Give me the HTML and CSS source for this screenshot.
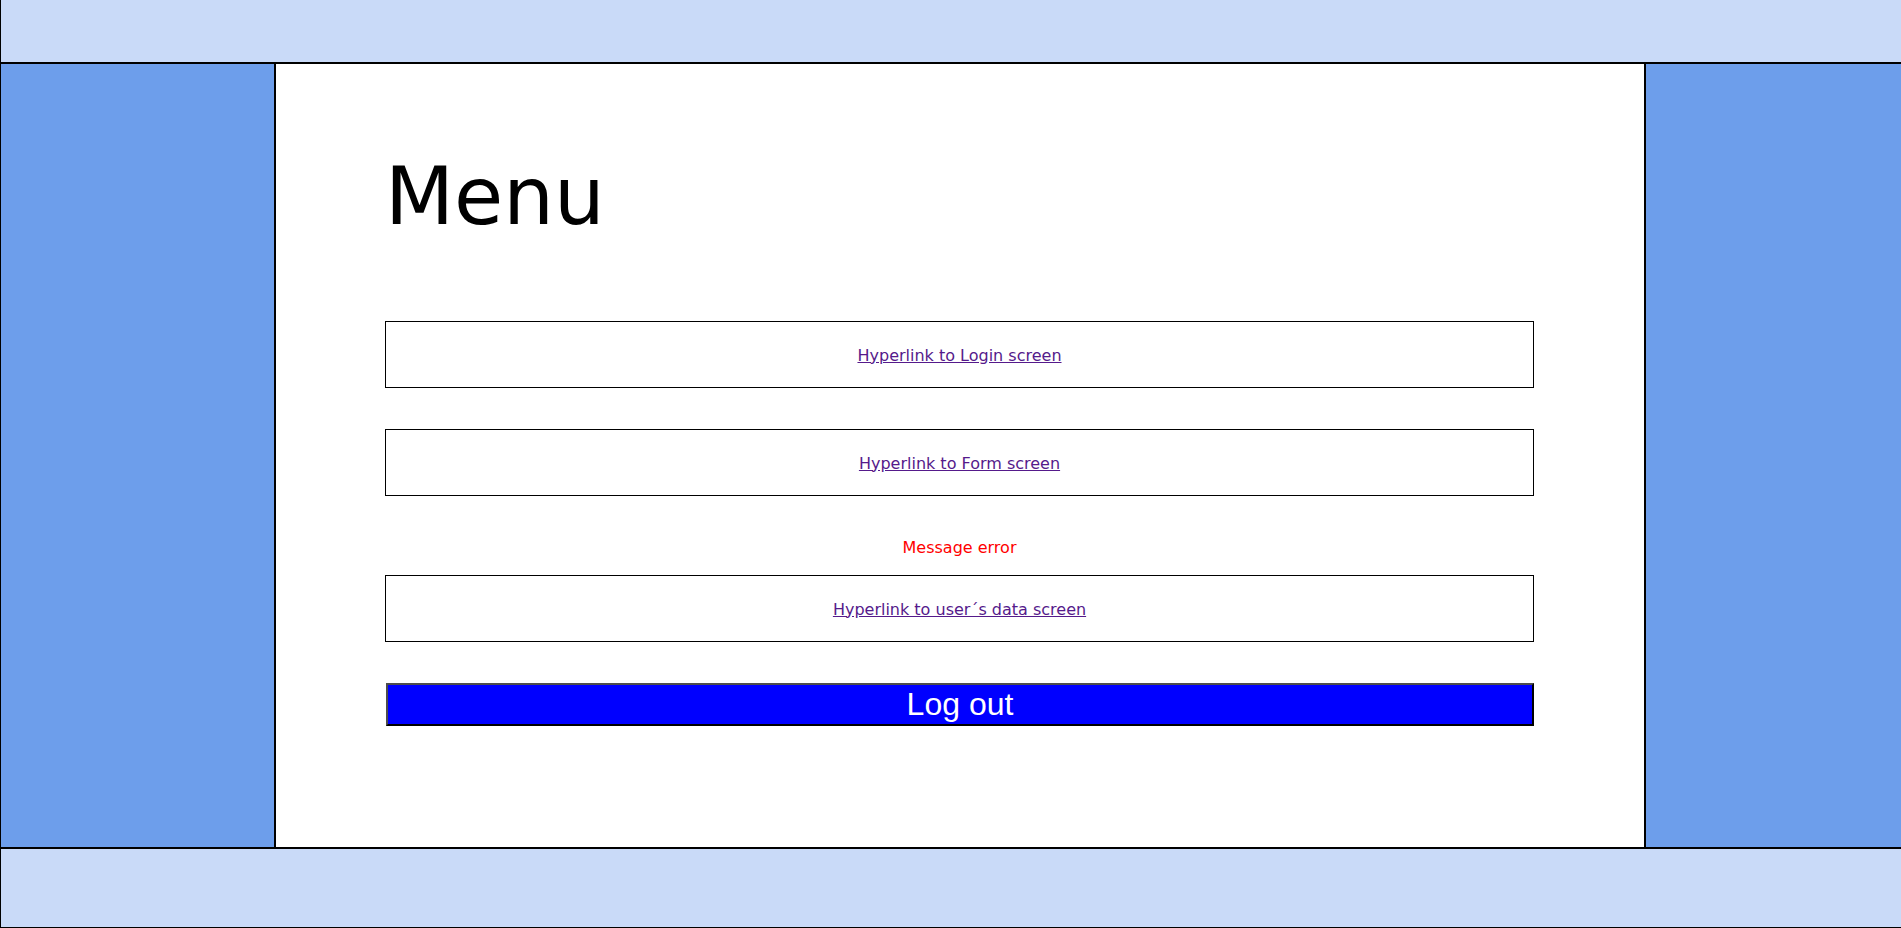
FILE: index.html
```html
<!DOCTYPE html>
<html lang="en">
<head>
<meta charset="utf-8">
<title>Menu</title>
<link rel="stylesheet" href="styles.css">
</head>
<body>
<div class="page">
  <header class="top-bar"></header>
  <main class="middle">
    <aside class="side side-left"></aside>
    <section class="content">
      <h1 class="title">Menu</h1>
      <div class="link-box box-first"><a class="nav-link" href="#login">Hyperlink to Login screen</a></div>
      <div class="link-box box-second"><a class="nav-link" href="#form">Hyperlink to Form screen</a></div>
      <p class="error-msg">Message error</p>
      <div class="link-box box-third"><a class="nav-link" href="#user">Hyperlink to user´s data screen</a></div>
      <button class="logout" type="button">Log out</button>
    </section>
    <aside class="side side-right"></aside>
  </main>
  <footer class="bottom-bar"></footer>
</div>
</body>
</html>
```

FILE: styles.css
```css
html, body {
  margin: 0;
  padding: 0;
}

body {
  font-family: "DejaVu Sans", Verdana, sans-serif;
  background: #ffffff;
}

.page {
  width: 1900px;
  border-left: 1px solid #000;
}

.top-bar {
  height: 62px;
  background: #c9daf8;
  border-bottom: 1px solid #000;
}

.middle {
  display: flex;
  height: 783px;
  border-top: 1px solid #000;
  border-bottom: 1px solid #000;
}

.side {
  background: #6d9eeb;
}

.side-left {
  width: 273px;
  border-right: 1px solid #000;
}

.side-right {
  flex: 1;
  border-left: 1px solid #000;
}

.content {
  border-left: 1px solid #000;
  border-right: 1px solid #000;
  background: #fff;
  padding-left: 109px;
  box-sizing: content-box;
  width: 1259px;
  display: flex;
  flex-direction: column;
  align-items: flex-start;
}

.title {
  margin: 86px 0 0 0;
  font-size: 80px;
  font-weight: normal;
  line-height: normal;
  color: #000;
}

.link-box {
  width: 1149px;
  height: 67px;
  box-sizing: border-box;
  border: 1px solid #000;
  display: flex;
  align-items: center;
  justify-content: center;
}

.box-first {
  margin-top: 78px;
}

.box-second {
  margin-top: 41px;
}

.box-third {
  margin-top: 18px;
}

.nav-link {
  font-size: 16px;
  color: #551a8b;
  text-decoration: underline;
  line-height: normal;
  padding-top: 1px;
}

.error-msg {
  width: 1149px;
  margin: 42px 0 0 0;
  font-size: 16px;
  line-height: normal;
  color: #ff0000;
  text-align: center;
}

.logout {
  margin: 41px 0 0 1px;
  width: 1148px;
  font-family: "Liberation Sans", Arial, sans-serif;
  font-size: 32px;
  line-height: normal;
  color: #fff;
  background: #0000ff;
  border-style: solid;
  border-width: 2px;
  border-color: #4d4d4d #000 #000 #4d4d4d;
  padding: 1px 6px;
}

.bottom-bar {
  height: 78px;
  background: #c9daf8;
  border-top: 1px solid #000;
  border-bottom: 1px solid #000;
}
```
